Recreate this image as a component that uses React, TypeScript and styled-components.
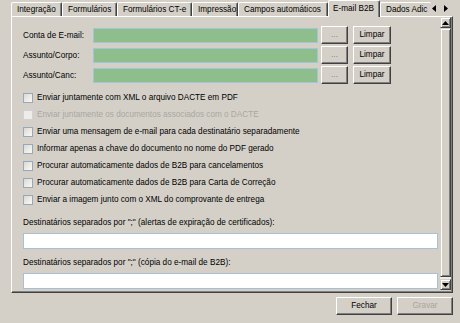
import styled, { createGlobalStyle } from 'styled-components'

const GlobalStyle = createGlobalStyle`
  html, body {
    margin: 0;
    padding: 0;
    background: #d4d0c8;
  }
  body {
    font-family: 'Liberation Sans', Arial, sans-serif;
    font-size: 8.2px;
    color: #000;
  }
`

const Window = styled.div`
  width: 460px;
  height: 323px;
  overflow: hidden;
  background: #d4d0c8;
  display: flex;
  flex-direction: column;
`

const TabStrip = styled.div`
  display: flex;
  align-items: flex-end;
  height: 16px;
  padding-left: 11px;
  position: relative;
  z-index: 1;
`

const Tab = styled.div<{ $w: number; $active?: boolean; $open?: boolean }>`
  box-sizing: border-box;
  flex: none;
  width: ${p => p.$w}px;
  height: ${p => (p.$active ? 17 : 14)}px;
  margin-bottom: ${p => (p.$active ? -1 : 0)}px;
  padding: ${p => (p.$active ? '3px 0 0 4px' : '2px 0 0 5px')};
  background: #d4d0c8;
  border-top: 1px solid #fff;
  border-left: 1px solid #fff;
  border-right: ${p => (p.$open ? 'none' : '1px solid #404040')};
  box-shadow: ${p => (p.$open ? 'none' : 'inset -1px 0 0 #808080')};
  border-radius: 2px 2px 0 0;
  line-height: 10px;
  white-space: nowrap;
`

const TabArrows = styled.div`
  display: flex;
  align-items: center;
  gap: 8px;
  height: 16px;
  padding: 0 0 0 1px;
  margin-top: -4px;
`

const Panel = styled.div`
  box-sizing: border-box;
  margin-left: 11px;
  width: 442px;
  height: 277px;
  border-top: 1px solid #fff;
  border-left: 1px solid #fff;
  border-right: 1px solid #404040;
  border-bottom: 1px solid #404040;
  box-shadow: inset -1px -1px 0 #808080;
  display: flex;
`

const Content = styled.div`
  flex: 1;
  min-width: 0;
  overflow: hidden;
  padding: 9px 2px 0 11px;
`

const FieldRow = styled.div`
  display: flex;
  align-items: center;
  height: 18px;
  margin-bottom: 2px;
`

const FieldLabel = styled.div`
  width: 70px;
  flex: none;
  white-space: nowrap;
`

const GreenInput = styled.div`
  box-sizing: border-box;
  width: 225px;
  height: 15px;
  background: #8dbe8b;
  border: 1px solid #a3c6d6;
  margin-right: 3px;
`

const Button = styled.button<{ $w: number; $muted?: boolean }>`
  box-sizing: border-box;
  flex: none;
  width: ${p => p.$w}px;
  height: 18px;
  padding: 0;
  font: inherit;
  color: ${p => (p.$muted ? '#a8a59e' : '#000')};
  background: #d4d0c8;
  border: 1px solid;
  border-color: #fff #404040 #404040 #fff;
  box-shadow: inset -1px -1px 0 #808080;
  line-height: 14px;
  text-align: center;
`

const DotsButton = styled(Button)`
  color: #8a7f92;
  margin-right: 5px;
`

const CheckList = styled.div`
  margin-top: 5px;
`

const CheckRow = styled.div<{ $disabled?: boolean }>`
  display: flex;
  align-items: center;
  height: 17px;
  white-space: nowrap;
  color: ${p => (p.$disabled ? '#a9a7a1' : '#000')};
`

const Box = styled.span<{ $disabled?: boolean }>`
  box-sizing: border-box;
  flex: none;
  width: 10px;
  height: 10px;
  margin-right: 4px;
  border: 1px solid ${p => (p.$disabled ? '#cfd3d9' : '#97a8bd')};
  background: ${p =>
    p.$disabled
      ? '#edece8'
      : 'linear-gradient(135deg, #d9d8d1 0%, #eeede8 60%, #f8f8f6 100%)'};
`

const TextLabel = styled.div<{ $gap: number }>`
  margin-top: ${p => p.$gap}px;
  height: 12px;
  line-height: 12px;
  white-space: nowrap;
`

const WhiteInput = styled.div`
  box-sizing: border-box;
  height: 16px;
  margin-top: 4px;
  background: #fff;
  border: 1px solid #a9bfd6;
`

const ScrollBar = styled.div`
  flex: none;
  width: 11px;
  margin: 0 1px 2px 0;
  display: flex;
  flex-direction: column;
  background: #ecebe6;
`

const ScrollButton = styled.div`
  box-sizing: border-box;
  flex: none;
  height: 11px;
  display: flex;
  align-items: center;
  justify-content: center;
  background: #d4d0c8;
  border: 1px solid;
  border-color: #d4d0c8 #404040 #404040 #d4d0c8;
  box-shadow: inset 1px 1px 0 #fff, inset -1px -1px 0 #808080;
`

const Thumb = styled.div`
  box-sizing: border-box;
  flex: 1;
  margin-bottom: 2px;
  background: #d4d0c8;
  border: 1px solid;
  border-color: #d4d0c8 #404040 #404040 #d4d0c8;
  box-shadow: inset 1px 1px 0 #fff, inset -1px -1px 0 #808080;
`

const Footer = styled.div`
  display: flex;
  justify-content: flex-end;
  gap: 5px;
  padding: 4px 7px 0 0;
`

const Arrow = ({ dir }: { dir: 'left' | 'right' | 'up' | 'down' }) => {
  const pts = {
    left: '4,0 4,7 0,3.5',
    right: '0,0 0,7 4,3.5',
    up: '0,4 7,4 3.5,0',
    down: '0,0 7,0 3.5,4',
  }[dir]
  const vertical = dir === 'up' || dir === 'down'
  return (
    <svg width={vertical ? 7 : 4} height={vertical ? 4 : 7} viewBox={vertical ? '0 0 7 4' : '0 0 4 7'}>
      <polygon points={pts} fill="#000" />
    </svg>
  )
}

const tabs = [
  { label: 'Integração', w: 51 },
  { label: 'Formulários', w: 55 },
  { label: 'Formulários CT-e', w: 75 },
  { label: 'Impressão', w: 46 },
  { label: 'Campos automáticos', w: 90 },
  { label: 'E-mail B2B', w: 52, active: true },
  { label: 'Dados Adic', w: 51, open: true },
]

const fields = ['Conta de E-mail:', 'Assunto/Corpo:', 'Assunto/Canc:']

const options = [
  { label: 'Enviar juntamente com XML o arquivo DACTE em PDF' },
  { label: 'Enviar juntamente os documentos associados com o DACTE', disabled: true },
  { label: 'Enviar uma mensagem de e-mail para cada destinatário separadamente' },
  { label: 'Informar apenas a chave do documento no nome do PDF gerado' },
  { label: 'Procurar automaticamente dados de B2B para cancelamentos' },
  { label: 'Procurar automaticamente dados de B2B para Carta de Correção' },
  { label: 'Enviar a imagem junto com o XML do comprovante de entrega' },
]

export default function App() {
  return (
    <Window>
      <GlobalStyle />
      <TabStrip>
        {tabs.map(t => (
          <Tab key={t.label} $w={t.w} $active={t.active} $open={t.open}>
            {t.label}
          </Tab>
        ))}
        <TabArrows>
          <Arrow dir="left" />
          <Arrow dir="right" />
        </TabArrows>
      </TabStrip>

      <Panel>
        <Content>
          {fields.map(f => (
            <FieldRow key={f}>
              <FieldLabel>{f}</FieldLabel>
              <GreenInput />
              <DotsButton $w={27}>...</DotsButton>
              <Button $w={38}>Limpar</Button>
            </FieldRow>
          ))}

          <CheckList>
            {options.map(o => (
              <CheckRow key={o.label} $disabled={o.disabled}>
                <Box $disabled={o.disabled} />
                {o.label}
              </CheckRow>
            ))}
          </CheckList>

          <TextLabel $gap={9}>
            Destinatários separados por ";" (alertas de expiração de certificados):
          </TextLabel>
          <WhiteInput />
          <TextLabel $gap={8}>Destinatários separados por ";" (cópia do e-mail de B2B):</TextLabel>
          <WhiteInput />
        </Content>

        <ScrollBar>
          <ScrollButton>
            <Arrow dir="up" />
          </ScrollButton>
          <Thumb />
          <ScrollButton>
            <Arrow dir="down" />
          </ScrollButton>
        </ScrollBar>
      </Panel>

      <Footer>
        <Button $w={56}>Fechar</Button>
        <Button $w={56} $muted>
          Gravar
        </Button>
      </Footer>
    </Window>
  )
}
